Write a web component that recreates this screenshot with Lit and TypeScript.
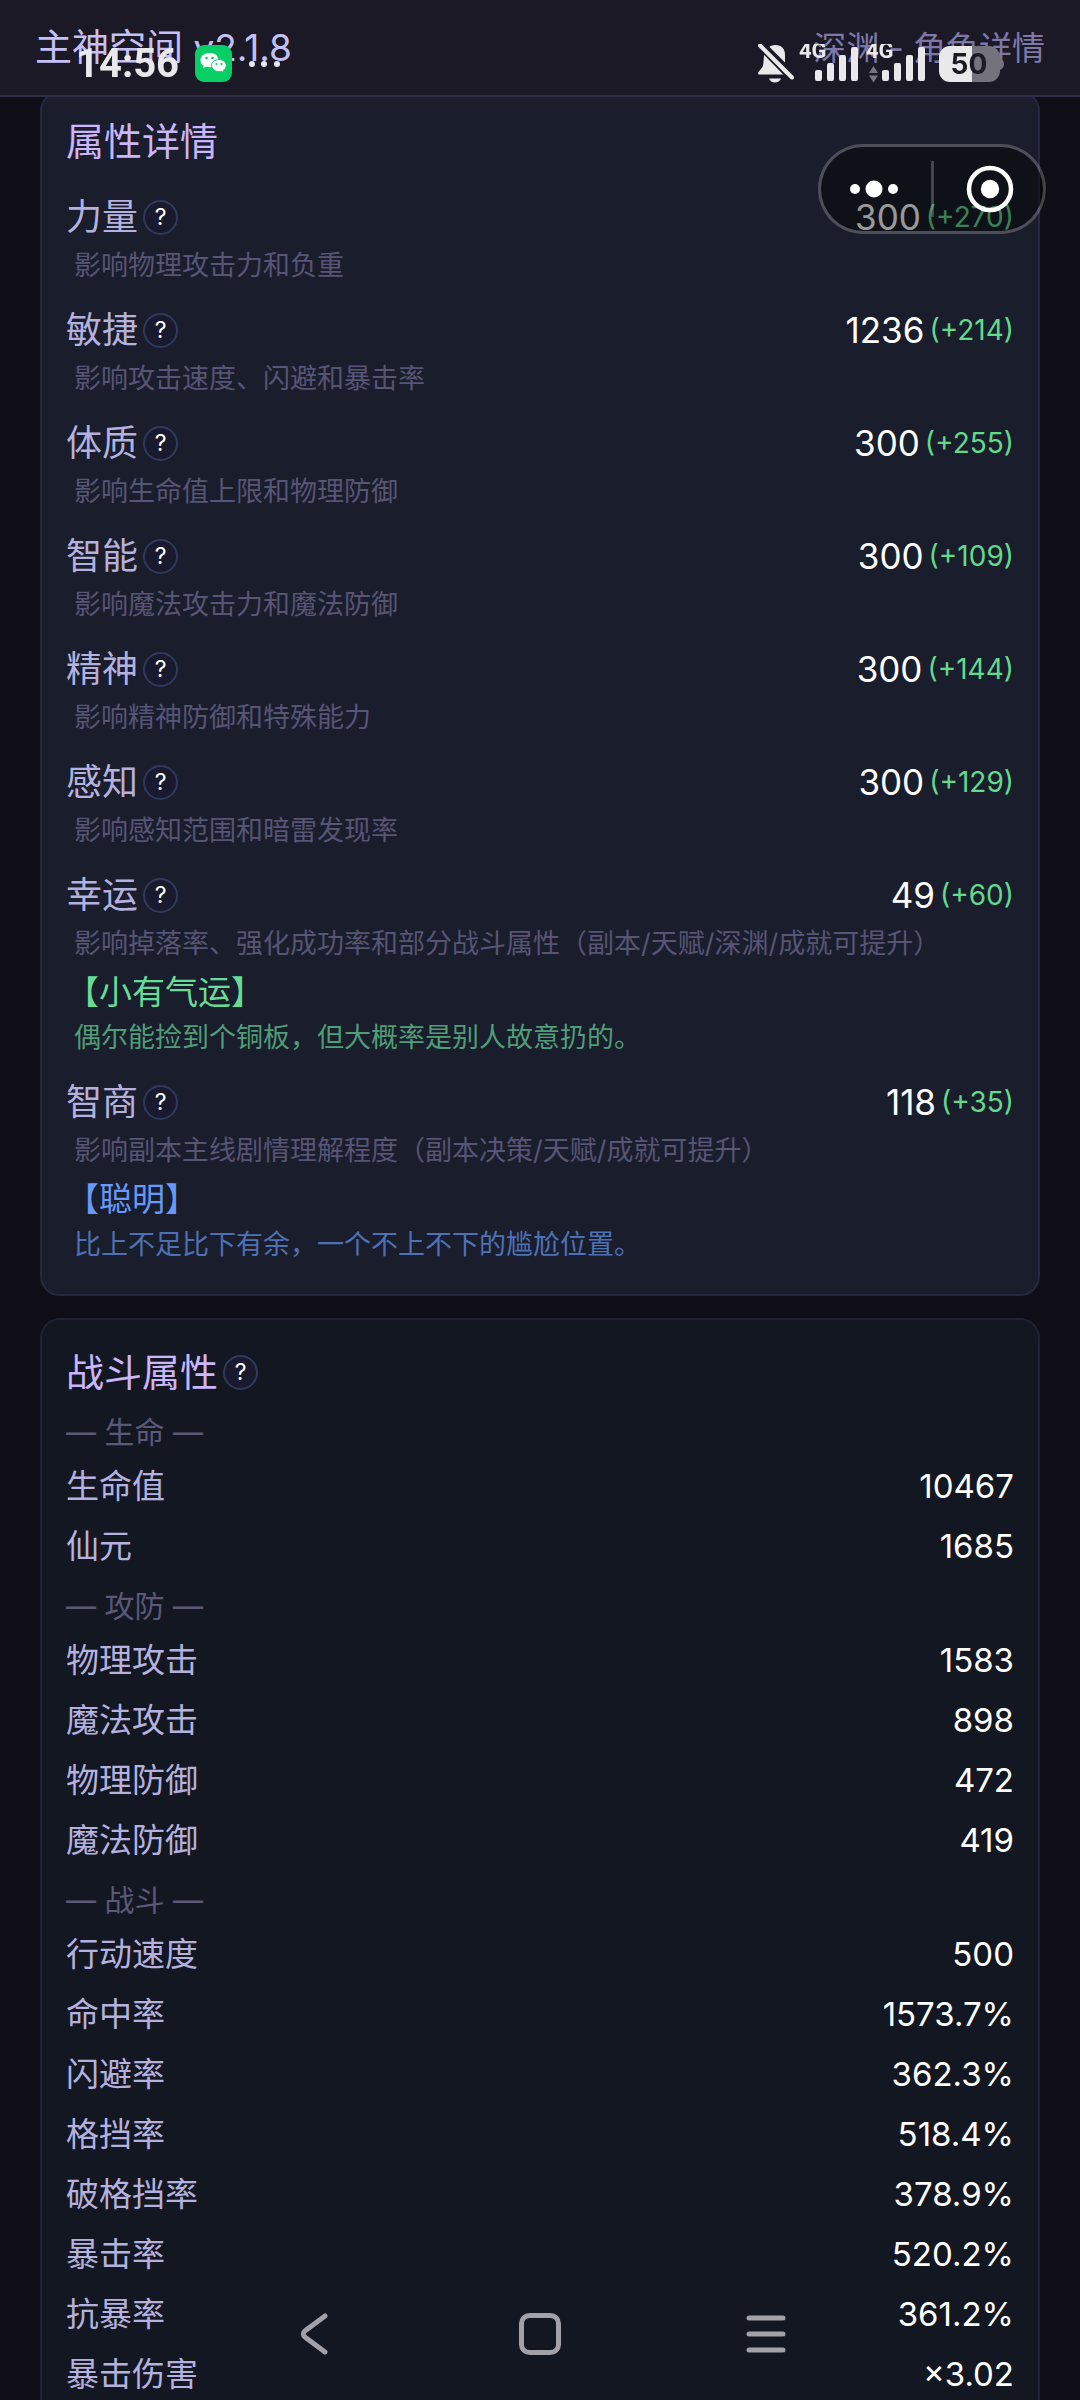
import { LitElement, html, svg, css, nothing } from "lit";
import { customElement, property } from "lit/decorators.js";

interface Trait {
  label: string;
  text: string;
  tone: "green" | "blue";
}

interface Attribute {
  name: string;
  value: number;
  bonus: number;
  hint: string;
  trait?: Trait;
}

interface CombatGroup {
  title: string;
  rows: [string, string][];
}

const ATTRIBUTES: Attribute[] = [
  { name: "力量", value: 300, bonus: 270, hint: "影响物理攻击力和负重" },
  { name: "敏捷", value: 1236, bonus: 214, hint: "影响攻击速度、闪避和暴击率" },
  { name: "体质", value: 300, bonus: 255, hint: "影响生命值上限和物理防御" },
  { name: "智能", value: 300, bonus: 109, hint: "影响魔法攻击力和魔法防御" },
  { name: "精神", value: 300, bonus: 144, hint: "影响精神防御和特殊能力" },
  { name: "感知", value: 300, bonus: 129, hint: "影响感知范围和暗雷发现率" },
  {
    name: "幸运",
    value: 49,
    bonus: 60,
    hint: "影响掉落率、强化成功率和部分战斗属性（副本/天赋/深渊/成就可提升）",
    trait: { label: "【小有气运】", text: "偶尔能捡到个铜板，但大概率是别人故意扔的。", tone: "green" },
  },
  {
    name: "智商",
    value: 118,
    bonus: 35,
    hint: "影响副本主线剧情理解程度（副本决策/天赋/成就可提升）",
    trait: { label: "【聪明】", text: "比上不足比下有余，一个不上不下的尴尬位置。", tone: "blue" },
  },
];

const COMBAT: CombatGroup[] = [
  { title: "生命", rows: [["生命值", "10467"], ["仙元", "1685"]] },
  {
    title: "攻防",
    rows: [["物理攻击", "1583"], ["魔法攻击", "898"], ["物理防御", "472"], ["魔法防御", "419"]],
  },
  {
    title: "战斗",
    rows: [
      ["行动速度", "500"],
      ["命中率", "1573.7%"],
      ["闪避率", "362.3%"],
      ["格挡率", "518.4%"],
      ["破格挡率", "378.9%"],
      ["暴击率", "520.2%"],
      ["抗暴率", "361.2%"],
      ["暴击伤害", "×3.02"],
    ],
  },
];

/** Round question-mark button that explains a term. */
@customElement("help-button")
class HelpButton extends LitElement {
  @property() topic = "";

  static styles = css`
    :host {
      display: block;
      flex: none;
    }
    .help {
      display: flex;
      align-items: center;
      justify-content: center;
      box-sizing: border-box;
      width: 35px;
      height: 35px;
      margin: 0;
      padding: 0;
      border: 2px solid #2f3a5c;
      border-radius: 50%;
      background: #1a1a2e;
      color: #fff;
      font: 400 23px/23px Inter, "Noto Sans CJK SC", sans-serif;
    }
  `;

  render() {
    return html`<button class="help" type="button" aria-label=${this.topic}>?</button>`;
  }
}

/** Phone status bar drawn over the page header. */
@customElement("status-bar")
class StatusBar extends LitElement {
  static styles = css`
    :host {
      display: flex;
      align-items: center;
      justify-content: space-between;
      box-sizing: border-box;
      height: 127px;
      padding: 0 76px 0 76px;
      color: #e9e9eb;
      pointer-events: none;
    }
    .side {
      display: flex;
      align-items: center;
    }
    .time {
      font: 700 40px/48px Roboto, sans-serif;
    }
    .app {
      margin: 0 17px 0 16px;
    }
    .bell {
      margin-right: 5px;
    }
    .signal {
      margin-right: 8px;
    }
    .battery {
      margin-left: 6px;
    }
    svg {
      display: block;
    }
    .tag {
      font: 700 22px Roboto, sans-serif;
    }
    .level {
      font: 700 28px Inter, sans-serif;
    }
  `;

  private signal(withArrows: boolean) {
    return html`<svg class="signal" width="59" height="40" viewBox="0 0 59 40" fill="#e9e9eb">
      <text class="tag" x="0" y="14">4G</text>
      <rect x="16" y="26" width="7" height="11" rx="2" />
      <rect x="28" y="19" width="7" height="18" rx="2" />
      <rect x="40" y="11" width="7" height="26" rx="2" />
      <rect x="52" y="3" width="7" height="34" rx="2" />
      ${withArrows ? svg`<path d="M7.500 22 12 29H3zM3 31.500H12L7.500 38.500z" fill="#77767f" />` : nothing}
    </svg>`;
  }

  render() {
    return html`
      <div class="side">
        <time class="time">14:56</time>
        <svg class="app" width="37" height="37" viewBox="0 0 37 37">
          <rect width="37" height="37" rx="9" fill="#07cf66" />
          <path
            d="M14.500 8C9.300 8 5.500 11.200 5.500 15.200c0 2.300 1.200 4.200 3.200 5.600L8 23.300l3-1.500c1.100.3 2.200.5 3.500.5s9-2.500 9-7.100S19.700 8 14.500 8z"
            fill="#fff"
          />
          <circle cx="11.500" cy="13" r="1.300" fill="#07cf66" />
          <circle cx="17.500" cy="13" r="1.300" fill="#07cf66" />
          <path
            d="M24 14.600c-4.300 0-7.400 2.600-7.400 6s3.100 6.100 7.400 6.100c.9 0 1.800-.1 2.600-.4l2.400 1.500-.6-2.400c1.800-1.200 2.900-2.800 2.900-4.800 0-3.400-3.100-6-7.300-6z"
            fill="#fff"
            stroke="#07cf66"
          />
          <circle cx="21.500" cy="19" r="1.100" fill="#07cf66" />
          <circle cx="26.500" cy="19" r="1.100" fill="#07cf66" />
        </svg>
        <svg width="32" height="8" viewBox="0 0 32 8" fill="#e9e9eb">
          <circle cx="3" cy="4" r="3" />
          <circle cx="15" cy="4" r="3" />
          <circle cx="28" cy="4" r="3" />
        </svg>
      </div>
      <div class="side">
        <svg class="bell" width="36" height="40" viewBox="0 0 36 40" fill="#e9e9eb">
          <path
            d="M17.500 1C23.500 1 27 5 27 10.500V19l4 11.500H1.500C0 30.500-.4 29 .5 28L4.500 23C5.500 21 5.500 17 6 12 6.500 5 11.500 1 17.500 1z"
          />
          <path d="M11 34.500h12c-1 2.500-3.200 4-6 4s-5-1.500-6-4z" />
          <path d="M4-1 37 32" stroke="#1b1926" stroke-width="5" />
          <path d="M-1 2 31 35" stroke="#1b1926" stroke-width="2" />
          <path d="M2 1.500 34 33.500" stroke="#e9e9eb" stroke-width="4" stroke-linecap="round" />
        </svg>
        ${this.signal(false)} ${this.signal(true)}
        <svg class="battery" width="65" height="36" viewBox="0 0 65 36">
          <path d="M33 0h17a11 11 0 0 1 11 11v1q4 2 4 6t-4 6v1a11 11 0 0 1-11 11H33z" fill="#74737c" />
          <path d="M11 0h22v36H11A11 11 0 0 1 0 25V11A11 11 0 0 1 11 0z" fill="#e9e9eb" />
          <text class="level" x="30" y="28" text-anchor="middle" fill="#1b1a25">50</text>
        </svg>
      </div>
    `;
  }
}

/** Floating capsule with the menu and close controls. */
@customElement("mini-capsule")
class MiniCapsule extends LitElement {
  static styles = css`
    :host {
      display: flex;
      align-items: center;
      box-sizing: border-box;
      width: 228px;
      height: 90px;
      border: 3px solid rgba(255, 255, 255, 0.22);
      border-radius: 45px;
      background: rgba(0, 0, 0, 0.4);
      background-clip: padding-box;
    }
    .half {
      display: flex;
      flex: 1;
      align-items: center;
      justify-content: center;
      box-sizing: border-box;
      height: 100%;
      padding: 0;
      border: 0;
      background: none;
    }
    .more {
      padding-right: 4px;
    }
    .close {
      padding-left: 4px;
    }
    .rule {
      width: 3px;
      height: 56px;
      background: rgba(255, 255, 255, 0.22);
    }
    svg {
      display: block;
    }
  `;

  render() {
    return html`
      <button class="half more" type="button" aria-label="更多">
        <svg width="48" height="18" viewBox="0 0 48 18" fill="#fff">
          <circle cx="5" cy="9" r="5" />
          <circle cx="24" cy="9" r="8.500" />
          <circle cx="43" cy="9" r="5" />
        </svg>
      </button>
      <span class="rule"></span>
      <button class="half close" type="button" aria-label="关闭">
        <svg width="48" height="48" viewBox="0 0 48 48">
          <circle cx="24" cy="24" r="21" fill="none" stroke="#fff" stroke-width="4.500" />
          <circle cx="24" cy="24" r="9.200" fill="#fff" />
        </svg>
      </button>
    `;
  }
}

/** System navigation: back, home, recent apps. */
@customElement("system-nav")
class SystemNav extends LitElement {
  static styles = css`
    :host {
      display: flex;
      justify-content: center;
      gap: 126px;
      padding-bottom: 16px;
      pointer-events: none;
    }
    .key {
      display: flex;
      align-items: center;
      justify-content: center;
      width: 100px;
      height: 100px;
      padding: 0;
      border: 0;
      background: none;
      pointer-events: auto;
    }
    .glyph {
      display: block;
      fill: none;
      stroke: #a1a1a7;
      stroke-width: 5;
      stroke-linecap: round;
      stroke-linejoin: round;
    }
  `;

  render() {
    return html`
      <button class="key" type="button" aria-label="返回">
        <svg class="glyph" width="44" height="44" viewBox="0 0 44 44">
          <path d="M33 4 13.500 18.500Q9 22 13.500 25.500L33 40" />
        </svg>
      </button>
      <button class="key" type="button" aria-label="主页">
        <svg class="glyph" width="44" height="44" viewBox="0 0 44 44">
          <rect x="3.500" y="3.500" width="37" height="37" rx="8" />
        </svg>
      </button>
      <button class="key" type="button" aria-label="最近任务">
        <svg class="glyph" width="44" height="44" viewBox="0 0 44 44">
          <path d="M5 6H39M5 22H39M5 38H39" />
        </svg>
      </button>
    `;
  }
}

@customElement("app-root")
class AppRoot extends LitElement {
  static styles = css`
    :host {
      display: block;
      position: relative;
      height: 100vh;
      overflow: hidden;
      background: #0f0e17;
      font-family: Inter, "Noto Sans CJK SC", sans-serif;
      font-weight: 400;
    }
    .scroll {
      height: 100%;
      overflow-y: auto;
      scrollbar-width: none;
    }
    .header {
      position: sticky;
      top: 0;
      z-index: 1;
      display: flex;
      align-items: center;
      justify-content: space-between;
      box-sizing: border-box;
      height: 97px;
      padding: 0 35px;
      border-bottom: 2px solid #302d49;
      background: #1b1926;
    }
    .brand {
      margin: 0;
      color: #c4c0f5;
      font-size: 37px;
      font-weight: 400;
      line-height: 52px;
    }
    .crumb {
      color: #7d78a8;
      font-size: 33px;
      line-height: 44px;
    }
    .main {
      display: flex;
      flex-direction: column;
      gap: 22px;
      margin-top: -6px;
      padding: 0 40px 40px;
    }
    .card {
      padding: 22px 24px 26px;
      border: 2px solid #262840;
      border-radius: 20px;
      background: #1a1d2b;
    }
    .card.dark {
      padding-top: 26px;
      border-color: #1f2031;
      background: #131722;
    }
    .title-row {
      display: flex;
      align-items: center;
      gap: 5px;
    }
    .title {
      margin: 0;
      color: #cbb5fb;
      font-size: 38px;
      font-weight: 400;
      line-height: 52px;
    }
    .attributes {
      display: flex;
      flex-direction: column;
      gap: 15px;
      margin-top: 24px;
    }
    .line {
      display: flex;
      align-items: center;
      justify-content: space-between;
    }
    .name {
      display: flex;
      align-items: center;
      gap: 5px;
      color: #b5b1de;
      font-size: 36px;
      line-height: 52px;
    }
    .score {
      display: flex;
      align-items: center;
      gap: 5px;
      color: #fff;
      font-size: 35px;
      line-height: 52px;
    }
    .bonus {
      color: #62d98b;
      font-size: 28px;
    }
    .hint,
    .trait-text {
      margin: 0;
      padding-left: 8px;
      color: #575475;
      font-size: 27px;
      line-height: 46px;
    }
    .trait {
      padding-bottom: 2px;
    }
    .trait-label {
      margin: 0;
      font-size: 33px;
      line-height: 50px;
    }
    .trait-text {
      line-height: 42px;
    }
    .green .trait-label {
      color: #68dc97;
    }
    .green .trait-text {
      color: #509e78;
    }
    .blue .trait-label {
      color: #6699f8;
    }
    .blue .trait-text {
      color: #4e71b5;
    }
    .groups {
      margin-top: 4px;
    }
    .group-title {
      margin: 0;
      padding: 8px 0 2px;
      color: #5b5878;
      font-size: 30px;
      font-weight: 400;
      line-height: 44px;
    }
    .stats {
      width: 100%;
      border-collapse: collapse;
      font-size: 33px;
      line-height: 60px;
    }
    .stat-name {
      padding: 0;
      color: #b5b1de;
      font-weight: 400;
      text-align: left;
    }
    .stat-value {
      padding: 0;
      color: #fff;
      text-align: right;
    }
    .status {
      position: absolute;
      inset: 0 0 auto;
      z-index: 2;
    }
    .capsule {
      position: absolute;
      top: 144px;
      right: 34px;
      z-index: 2;
    }
    .nav {
      position: absolute;
      inset: auto 0 0;
      z-index: 2;
    }
  `;

  private attribute(a: Attribute) {
    return html`<article>
      <div class="line">
        <span class="name">${a.name}<help-button .topic=${a.name}></help-button></span>
        <span class="score">${a.value}<span class="bonus">(+${a.bonus})</span></span>
      </div>
      <p class="hint">${a.hint}</p>
      ${a.trait
        ? html`<div class="trait ${a.trait.tone}">
            <p class="trait-label">${a.trait.label}</p>
            <p class="trait-text">${a.trait.text}</p>
          </div>`
        : nothing}
    </article>`;
  }

  private group(g: CombatGroup) {
    return html`<h3 class="group-title">— ${g.title} —</h3>
      <table class="stats" aria-label=${g.title}>
        <tbody>
          ${g.rows.map(
            ([name, value]) => html`<tr>
              <th class="stat-name" scope="row">${name}</th>
              <td class="stat-value">${value}</td>
            </tr>`,
          )}
        </tbody>
      </table>`;
  }

  render() {
    return html`
      <div class="scroll">
        <header class="header">
          <h1 class="brand">主神空间 v2.1.8</h1>
          <span class="crumb">深渊 - 角色详情</span>
        </header>
        <main class="main">
          <section class="card">
            <h2 class="title">属性详情</h2>
            <div class="attributes">${ATTRIBUTES.map((a) => this.attribute(a))}</div>
          </section>
          <section class="card dark">
            <div class="title-row">
              <h2 class="title">战斗属性</h2>
              <help-button topic="战斗属性"></help-button>
            </div>
            <div class="groups">${COMBAT.map((g) => this.group(g))}</div>
          </section>
        </main>
      </div>
      <status-bar class="status"></status-bar>
      <mini-capsule class="capsule"></mini-capsule>
      <system-nav class="nav"></system-nav>
    `;
  }
}
